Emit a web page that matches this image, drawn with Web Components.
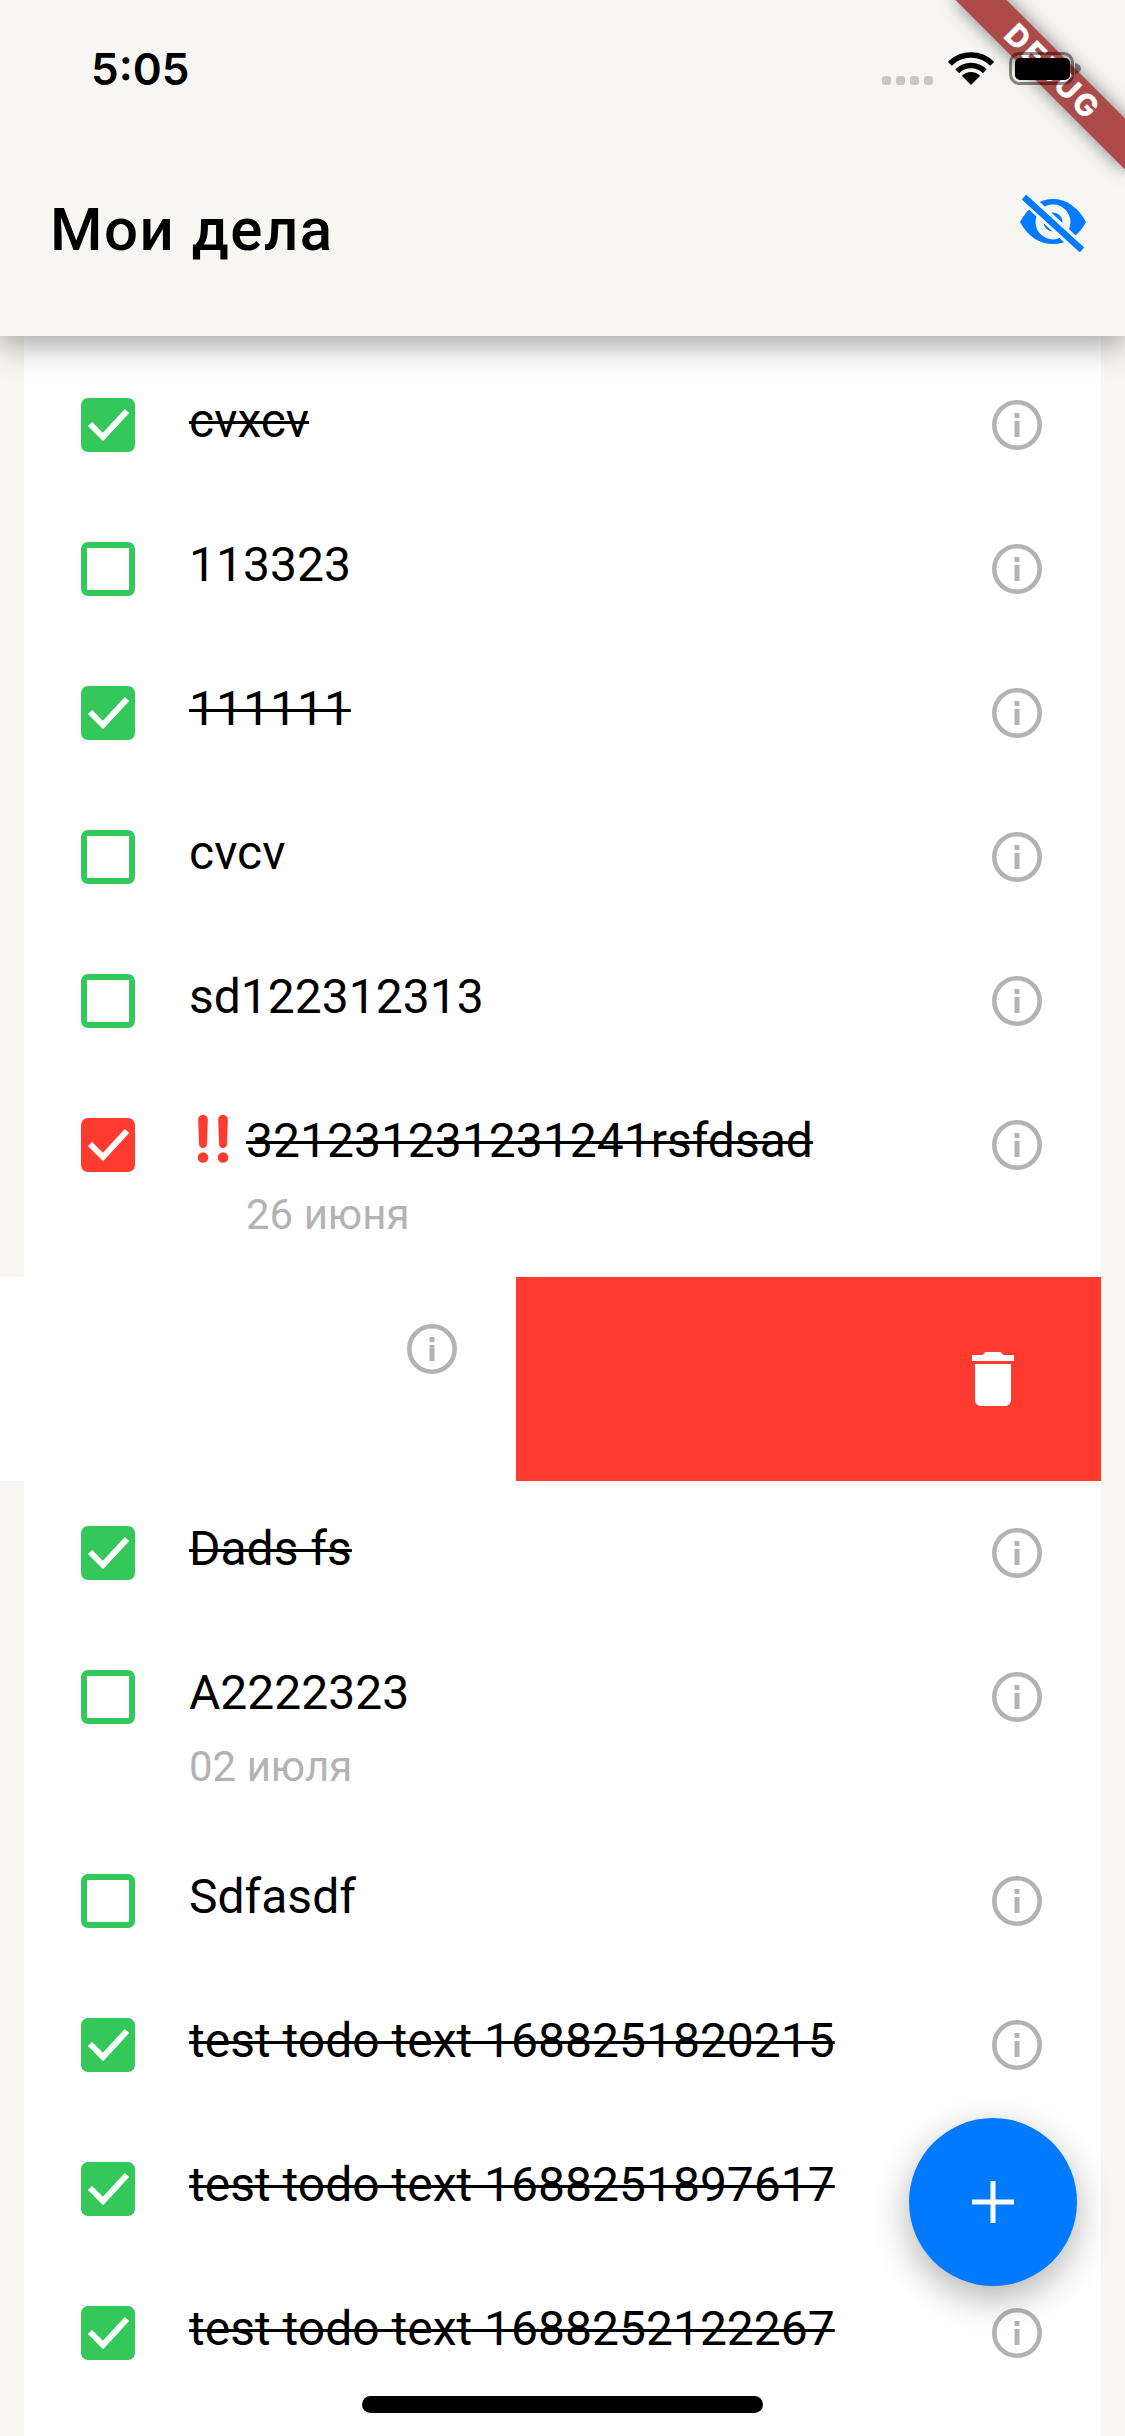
<!DOCTYPE html>
<html lang="ru">
<head>
<meta charset="utf-8">
<title>Мои дела</title>
<style>
    html, body { margin: 0; padding: 0; background: #f7f6f2; }
    body { font-family: Roboto, "Noto Sans", sans-serif; }
</style>
</head>
<body>
<todo-screen>
    <status-bar slot="top" time="5:05"></status-bar>
    <app-bar slot="top">Мои дела</app-bar>

    <todo-row done>cvxcv</todo-row>
    <todo-row>113323</todo-row>
    <todo-row done>111111</todo-row>
    <todo-row>cvcv</todo-row>
    <todo-row>sd122312313</todo-row>
    <todo-row done important>321231231231241rsfdsad<span slot="date">26 июня</span></todo-row>
    <swipe-row></swipe-row>
    <todo-row done>Dads fs</todo-row>
    <todo-row>A2222323<span slot="date">02 июля</span></todo-row>
    <todo-row>Sdfasdf</todo-row>
    <todo-row done>test todo text 1688251820215</todo-row>
    <todo-row done>test todo text 1688251897617</todo-row>
    <todo-row done>test todo text 1688252122267</todo-row>

    <add-button slot="over"></add-button>
    <debug-banner slot="over"></debug-banner>
    <home-indicator slot="over"></home-indicator>
</todo-screen>

<script>
const INFO_ICON = `
    <svg width="50" height="50" viewBox="0 0 50 50">
        <circle cx="25" cy="25" r="22.7" fill="none" stroke="#b3b3b3" stroke-width="4.6"/>
        <rect x="22.5" y="13" width="5" height="5" fill="#b3b3b3"/>
        <rect x="22.5" y="21" width="5" height="16" fill="#b3b3b3"/>
    </svg>`;

class TodoScreen extends HTMLElement {
    constructor() {
        super();
        this.attachShadow({ mode: "open" }).innerHTML = `
            <style>
            :host {
                display: flex;
                flex-direction: column;
                position: relative;
                width: 1125px;
                height: 2436px;
                overflow: hidden;
                background: #f7f6f2;
            }
            .list {
                flex: 1;
                margin: 0 24px;
                background: #fff;
                padding-top: 17px;
            }
            </style>
            <slot name="top"></slot>
            <div class="list"><slot></slot></div>
            <slot name="over"></slot>
        `;
    }
}

class StatusBar extends HTMLElement {
    constructor() {
        super();
        this.attachShadow({ mode: "open" }).innerHTML = `
            <style>
            :host {
                display: flex;
                justify-content: space-between;
                position: relative;
                z-index: 4;
                box-sizing: border-box;
                height: 132px;
                padding: 52px 43px 0 91px;
            }
            .time {
                font: 600 44px/33px Inter, "Liberation Sans", sans-serif;
                color: #000;
                margin-top: 1px;
            }
            .icons { display: flex; gap: 15px; align-items: flex-start; }
            .dots { display: flex; gap: 5px; margin-top: 24px; }
            .dots i { width: 9px; height: 9px; border-radius: 3px; background: #c8c7c3; }
            svg { display: block; }
            </style>
            <div class="time">${this.getAttribute("time")}</div>
            <div class="icons">
                <div class="dots"><i></i><i></i><i></i><i></i></div>
                <svg width="46" height="33" viewBox="0 0 46 33">
                    <path d="M1.8 11.8A30 30 0 0 1 44.2 11.8" fill="none" stroke="#000" stroke-width="5.5"/>
                    <path d="M9.2 19.2A19.5 19.5 0 0 1 36.8 19.2" fill="none" stroke="#000" stroke-width="5.5"/>
                    <path d="M23 33L13.8 23.8A13 13 0 0 1 32.2 23.8Z" fill="#000"/>
                </svg>
                <svg width="73" height="33" viewBox="0 0 73 33">
                    <rect x="1.5" y="1.5" width="62" height="30" rx="9" fill="none" stroke="#000" stroke-opacity=".45" stroke-width="3"/>
                    <rect x="6" y="6" width="55" height="22" rx="5" fill="#000"/>
                    <path d="M66 11c4 1 6 3 6 5.500s-2 4.500-6 5.500z" fill="#000" fill-opacity=".45"/>
                </svg>
            </div>
        `;
    }
}

class AppBar extends HTMLElement {
    constructor() {
        super();
        this.attachShadow({ mode: "open" }).innerHTML = `
            <style>
            :host {
                display: flex;
                justify-content: space-between;
                align-items: flex-start;
                position: relative;
                z-index: 2;
                box-sizing: border-box;
                height: 204px;
                padding: 60px 39px 0 50px;
                background: #f7f6f2;
                box-shadow: 0 9px 30px rgba(0, 0, 0, .36);
                /* the shadow must only fall on the list, not up over the status bar */
                clip-path: inset(0 0 -80px 0);
            }
            .title {
                font: 500 60px/70px Roboto, sans-serif;
                letter-spacing: 1.5px;
                color: #000;
                padding-top: 3px;
            }
            svg { display: block; margin-top: 3px; }
            </style>
            <div class="title"><slot></slot></div>
            <svg width="66" height="57" viewBox="0 0 66 57">
                <path d="M0 27C8 12 20 4 33 4S58 12 66 27C58 42 46 49 33 49S8 42 0 27Z" fill="#007aff"/>
                <circle cx="33" cy="27" r="13.500" fill="none" stroke="#f7f6f2" stroke-width="8"/>
                <path d="M5 2L63 56" stroke="#f7f6f2" stroke-width="13"/>
                <path d="M4 2L62 55" stroke="#007aff" stroke-width="6.500"/>
            </svg>
        `;
    }
}

class TodoRow extends HTMLElement {
    constructor() {
        super();
        const done = this.hasAttribute("done");
        const important = this.hasAttribute("important");
        const color = important ? "#ff3b30" : "#34c759";
        this.attachShadow({ mode: "open" }).innerHTML = `
            <style>
            :host {
                display: flex;
                box-sizing: border-box;
                min-height: 144px;
                padding: 0 59px 0 57px;
                font-family: Roboto, sans-serif;
            }
            .box {
                box-sizing: border-box;
                width: 54px;
                height: 54px;
                margin: 45px 54px 0 0;
                border: 6px solid ${color};
                border-radius: 7px;
                background: ${done ? color : "#fff"};
                flex: none;
            }
            .box svg { display: block; margin: -6px; }
            .flag { display: block; flex: none; width: 57px; height: 48px; margin: 2px 0 0 0; }
            .main { flex: 1; padding-top: 40px; min-width: 0; }
            .line { display: flex; }
            .text {
                font-size: 48px;
                line-height: 56px;
                color: #000;
                white-space: nowrap;
                text-decoration: ${done ? "line-through" : "none"};
                text-decoration-thickness: 3px;
            }
            .date {
                font-size: 42px;
                line-height: 49px;
                color: #b3b3b3;
                margin-left: ${important ? "57px" : "0"};
            }
            .date.has { margin-top: 21px; padding-bottom: 38px; }
            .info { flex: none; margin-top: 47px; }
            .info svg { display: block; }
            </style>
            <div class="box">${done ? `
                <svg width="54" height="54" viewBox="0 0 54 54">
                    <path d="M9 26L22 39L46 13" fill="none" stroke="#fff" stroke-width="6"/>
                </svg>` : ""}</div>
            <div class="main">
                <div class="line">
                    ${important ? `
                    <svg class="flag" viewBox="0 0 57 48">
                        <path d="M14 0c3 0 5 2 4.800 5L18 29c0 2-1.500 4-4 4s-4-2-4-4L9.200 5C9 2 11 0 14 0z" fill="#ff3b30"/>
                        <circle cx="14" cy="42.500" r="5.300" fill="#ff3b30"/>
                        <path d="M34 0c3 0 5 2 4.800 5L38 29c0 2-1.500 4-4 4s-4-2-4-4L29.200 5C29 2 31 0 34 0z" fill="#ff3b30"/>
                        <circle cx="34" cy="42.500" r="5.300" fill="#ff3b30"/>
                    </svg>` : ""}
                    <span class="text"><slot></slot></span>
                </div>
                <div class="date"><slot name="date"></slot></div>
            </div>
            <div class="info">${INFO_ICON}</div>
        `;
        if (this.querySelector('[slot="date"]')) {
            this.shadowRoot.querySelector(".date").classList.add("has");
        }
    }
}

class SwipeRow extends HTMLElement {
    constructor() {
        super();
        this.attachShadow({ mode: "open" }).innerHTML = `
            <style>
            :host {
                display: flex;
                height: 204px;
                margin-left: -24px;
            }
            .content {
                box-sizing: border-box;
                width: 516px;
                padding: 47px 59px 0 0;
                background: #fff;
                display: flex;
                justify-content: flex-end;
            }
            .content svg { display: block; }
            .remove {
                flex: 1;
                display: flex;
                align-items: center;
                justify-content: flex-end;
                padding-right: 72px;
                background: #ff3b30;
            }
            .remove svg { display: block; }
            </style>
            <div class="content">${INFO_ICON}</div>
            <div class="remove">
                <svg width="72" height="72" viewBox="0 0 24 24">
                    <path d="M6 19c0 1.100.9 2 2 2h8c1.100 0 2-.9 2-2V7H6v12zM19 4h-3.500l-1-1h-5l-1 1H5v2h14V4z" fill="#fff"/>
                </svg>
            </div>
        `;
    }
}

class AddButton extends HTMLElement {
    constructor() {
        super();
        this.attachShadow({ mode: "open" }).innerHTML = `
            <style>
            :host {
                position: absolute;
                right: 48px;
                bottom: 150px;
                z-index: 3;
                display: flex;
                align-items: center;
                justify-content: center;
                width: 168px;
                height: 168px;
                border-radius: 50%;
                background: #007aff;
                box-shadow: 0 12px 36px rgba(0, 0, 0, .3);
            }
            svg { display: block; }
            </style>
            <svg width="42" height="42" viewBox="0 0 42 42">
                <path d="M18.500 0h5v18.500H42v5H23.500V42h-5V23.500H0v-5h18.500z" fill="#fff"/>
            </svg>
        `;
    }
}

class DebugBanner extends HTMLElement {
    constructor() {
        super();
        this.attachShadow({ mode: "open" }).innerHTML = `
            <style>
            :host {
                position: absolute;
                left: 933px;
                top: 54px;
                z-index: 3;
                display: flex;
                align-items: center;
                justify-content: center;
                width: 240px;
                height: 36px;
                transform: rotate(45deg);
                background: #ad4a4a;
                box-shadow: 0 0 18px rgba(0, 0, 0, .5);
                color: #fff;
                font: 800 30.6px/36px Inter, "Liberation Sans", sans-serif;
                letter-spacing: 3px;
            }
            </style>
            DEBUG
        `;
    }
}

class HomeIndicator extends HTMLElement {
    constructor() {
        super();
        this.attachShadow({ mode: "open" }).innerHTML = `
            <style>
            :host {
                position: absolute;
                left: 362px;
                bottom: 23px;
                z-index: 3;
                width: 401px;
                height: 17px;
                border-radius: 9px;
                background: #000;
            }
            </style>
        `;
    }
}

customElements.define("todo-screen", TodoScreen);
customElements.define("status-bar", StatusBar);
customElements.define("app-bar", AppBar);
customElements.define("todo-row", TodoRow);
customElements.define("swipe-row", SwipeRow);
customElements.define("add-button", AddButton);
customElements.define("debug-banner", DebugBanner);
customElements.define("home-indicator", HomeIndicator);
</script>
</body>
</html>
